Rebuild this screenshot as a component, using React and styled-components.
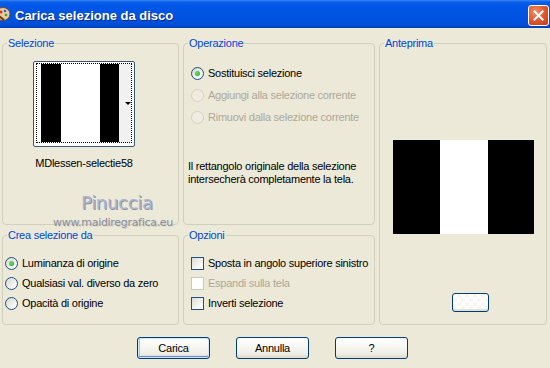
import React from "react";
import styled, { createGlobalStyle } from "styled-components";

const GlobalStyle = createGlobalStyle`
  html, body {
    margin: 0;
    padding: 0;
    background: #ece9d8;
  }
  body {
    font-family: "Liberation Sans", Arial, sans-serif;
    font-size: 11px;
    letter-spacing: -0.25px;
    color: #000;
  }
`;

const Window = styled.div`
  width: 550px;
  height: 368px;
  overflow: hidden;
  background: #ece9d8;
  display: flex;
  flex-direction: column;
`;

const TitleBar = styled.div`
  height: 28px;
  flex: none;
  display: flex;
  align-items: center;
  background: linear-gradient(
    to bottom,
    #3c87f0 0px,
    #0a5fea 2px,
    #0056e6 6px,
    #0053e0 18px,
    #004ed6 25px,
    #003fb8 28px
  );
`;

const TitleIcon = styled.svg`
  width: 16px;
  height: 16px;
  margin-left: -5px;
  flex: none;
`;

const TitleText = styled.div`
  margin-left: 4px;
  font-family: "Liberation Sans", Arial, sans-serif;
  font-weight: bold;
  font-size: 13px;
  letter-spacing: 0;
  color: #fff;
  text-shadow: 1px 1px 0 #0a2a8a;
  flex: 1;
  padding-top: 2px;
`;

const CloseButton = styled.div`
  width: 21px;
  height: 21px;
  box-sizing: border-box;
  margin-right: 1px;
  margin-top: 2px;
  border: 1px solid #fff;
  border-radius: 3px;
  background: radial-gradient(circle at 35% 30%, #f0906c 0%, #e0582f 50%, #c63a14 100%);
  display: flex;
  align-items: center;
  justify-content: center;
`;

const Content = styled.div`
  flex: 1;
  padding: 9px 0 0 2px;
  display: flex;
  flex-direction: column;
`;

const Panels = styled.div`
  display: grid;
  grid-template-columns: 177px 192px 168px;
  grid-template-rows: 188px 96px;
  column-gap: 4px;
  row-gap: 4px;
`;

const Group = styled.fieldset`
  position: relative;
  margin: 0;
  padding: 0;
  min-width: 0;
  border: 1px solid #d0d0bf;
  border-radius: 4px;
  grid-row: ${(p) => p.$row || "auto"};
  grid-column: ${(p) => p.$col || "auto"};
  display: flex;
  flex-direction: column;
`;

const Legend = styled.legend`
  color: #0046d5;
  padding: 0 1px;
  margin-left: 4px;
  line-height: 13px;
`;

const ThumbColumn = styled.div`
  margin: 11px 0 0 30px;
  width: 102px;
  display: flex;
  flex-direction: column;
  align-items: center;
`;

const Thumb = styled.div`
  width: 102px;
  height: 86px;
  box-sizing: border-box;
  border: 1px solid #34577c;
  border-radius: 2px;
  background: #fff;
  padding: 1px 2px 3px 2px;
  display: flex;
`;

const FocusRect = styled.div`
  flex: 1;
  border: 1px dotted #000;
  padding: 0 0 0 4px;
  display: flex;
`;

const Stripe = styled.div`
  width: ${(p) => p.$w}px;
  background: ${(p) => p.$color};
  flex: none;
  display: flex;
  align-items: center;
  justify-content: flex-end;
`;

const DropArrow = styled.div`
  width: 0;
  height: 0;
  border-left: 3px solid transparent;
  border-right: 3px solid transparent;
  border-top: 3px solid #000;
`;

const ThumbLabel = styled.div`
  margin-top: 10px;
  line-height: 13px;
  white-space: nowrap;
`;

const Watermark = styled.div`
  position: absolute;
  left: ${(p) => p.$left}px;
  top: ${(p) => p.$top}px;
  font-family: "DejaVu Sans", Verdana, sans-serif;
  font-size: ${(p) => p.$size}px;
  line-height: 1;
  letter-spacing: ${(p) => p.$spacing}px;
  color: ${(p) => p.$color};
  text-shadow: ${(p) => p.$shadow};
  white-space: nowrap;
  pointer-events: none;
`;

const OptionList = styled.div`
  display: flex;
  flex-direction: column;
  padding: ${(p) => p.$pad};
`;

const OptionRow = styled.div`
  height: ${(p) => p.$h}px;
  display: flex;
  align-items: center;
  gap: 4px;
  color: ${(p) => (p.$disabled ? "#aca899" : "#000")};
  white-space: nowrap;
`;

const Radio = styled.span`
  width: 13px;
  height: 13px;
  box-sizing: border-box;
  border-radius: 50%;
  flex: none;
  border: 1px solid ${(p) => (p.$disabled ? "#d4d1c2" : "#1c5180")};
  background: ${(p) =>
    p.$disabled ? "#efede2" : "linear-gradient(135deg, #d6d5ce 0%, #f3f3ef 60%, #ffffff 100%)"};
  display: flex;
  align-items: center;
  justify-content: center;
  &::after {
    content: "";
    display: ${(p) => (p.$checked ? "block" : "none")};
    width: 5px;
    height: 5px;
    border-radius: 50%;
    background: radial-gradient(circle at 40% 40%, #6ee06e, #1fa11f);
  }
`;

const Checkbox = styled.span`
  width: 13px;
  height: 13px;
  box-sizing: border-box;
  flex: none;
  border: 1px solid ${(p) => (p.$disabled ? "#cac8bb" : "#1c5180")};
  background: ${(p) =>
    p.$disabled ? "#fff" : "linear-gradient(135deg, #dcdcd7 0%, #f5f5f1 60%, #ffffff 100%)"};
`;

const Description = styled.div`
  margin: 32px 0 0 4px;
  line-height: 13px;
`;

const Preview = styled.div`
  margin: 90px auto 0;
  width: 141px;
  height: 94px;
  display: flex;
`;

const PreviewStripe = styled.div`
  flex: ${(p) => p.$w}px 0 0;
  background: ${(p) => p.$color};
`;

const SmallButton = styled.div`
  margin: 59px 0 0 72px;
  width: 37px;
  height: 19px;
  box-sizing: border-box;
  border: 1px solid #003c74;
  border-radius: 3px;
  background:
    repeating-conic-gradient(#f6f6f3 0% 25%, #ffffff 0% 50%) 0 0 / 8px 8px;
  box-shadow: inset 0 -2px 0 #e3e0d5;
`;

const ButtonRow = styled.div`
  display: flex;
  gap: 26px;
  margin-top: 12px;
  padding-left: 135px;
`;

const Button = styled.button`
  width: 73px;
  height: 22px;
  box-sizing: border-box;
  padding: 0;
  border: 1px solid #003c74;
  border-radius: 3px;
  font-family: "Liberation Sans", Arial, sans-serif;
  font-size: 11px;
  letter-spacing: -0.25px;
  color: #000;
  background: linear-gradient(to bottom, #ffffff 0%, #f7f7f4 40%, #eeede6 80%, #d8d4c8 100%);
  box-shadow: ${(p) =>
    p.$default
      ? "inset 0 0 0 1px #cee7ff, inset 0 -1px 0 1px #6982ee, inset 1px 0 0 1px #a4c3f5"
      : "inset 0 -1px 0 #e2dfd3"};
`;

function App() {
  return (
    <Window>
      <GlobalStyle />
      <TitleBar>
        <TitleIcon viewBox="0 0 16 16">
          <ellipse cx="8" cy="8" rx="7" ry="6.5" fill="#e8c9a0" stroke="#7a4a20" strokeWidth="1" />
          <circle cx="6" cy="6" r="1.5" fill="#d23c1c" />
          <circle cx="10" cy="5" r="1.3" fill="#2a6ad8" />
          <circle cx="11" cy="9" r="1.3" fill="#3aa03a" />
          <path d="M4 10 L9 14" stroke="#6b3a10" strokeWidth="2" />
        </TitleIcon>
        <TitleText>Carica selezione da disco</TitleText>
        <CloseButton>
          <svg width="11" height="11" viewBox="0 0 11 11">
            <path d="M1.5 1.5 L9.5 9.5 M9.5 1.5 L1.5 9.5" stroke="#fff" strokeWidth="2" strokeLinecap="square" />
          </svg>
        </CloseButton>
      </TitleBar>

      <Content>
        <Panels>
          <Group>
            <Legend>Selezione</Legend>
            <ThumbColumn>
              <Thumb>
                <FocusRect>
                  <Stripe $w={20} $color="#000" />
                  <Stripe $w={39} $color="#fff" />
                  <Stripe $w={19} $color="#000" />
                  <Stripe $w={12} $color="#f1f1f1">
                    <DropArrow />
                  </Stripe>
                </FocusRect>
              </Thumb>
              <ThumbLabel>MDlessen-selectie58</ThumbLabel>
            </ThumbColumn>
            <Watermark
              $left={78}
              $top={144}
              $size={18}
              $spacing={-0.3}
              $color="#aeb6cc"
              $shadow="1px 1px 0 #8890a8"
            >
              Pinuccia
            </Watermark>
            <Watermark
              $left={50}
              $top={167}
              $size={11}
              $spacing={-0.3}
              $color="#8a8c9c"
              $shadow="1px 1px 0 #d9d8cc"
            >
              www.maidiregrafica.eu
            </Watermark>
          </Group>

          <Group>
            <Legend>Operazione</Legend>
            <OptionList $pad="12px 0 0 7px">
              <OptionRow $h={22}>
                <Radio $checked />
                Sostituisci selezione
              </OptionRow>
              <OptionRow $h={22} $disabled>
                <Radio $disabled />
                Aggiungi alla selezione corrente
              </OptionRow>
              <OptionRow $h={22} $disabled>
                <Radio $disabled />
                Rimuovi dalla selezione corrente
              </OptionRow>
            </OptionList>
            <Description>
              Il rettangolo originale della selezione
              <br />
              intersecherà completamente la tela.
            </Description>
          </Group>

          <Group $row="1 / 3" $col="3">
            <Legend>Anteprima</Legend>
            <Preview>
              <PreviewStripe $w={47} $color="#000" />
              <PreviewStripe $w={48} $color="#fff" />
              <PreviewStripe $w={46} $color="#000" />
            </Preview>
            <SmallButton />
          </Group>

          <Group>
            <Legend>Crea selezione da</Legend>
            <OptionList $pad="11px 0 0 2px">
              <OptionRow $h={20}>
                <Radio $checked />
                Luminanza di origine
              </OptionRow>
              <OptionRow $h={20}>
                <Radio />
                Qualsiasi val. diverso da zero
              </OptionRow>
              <OptionRow $h={20}>
                <Radio />
                Opacità di origine
              </OptionRow>
            </OptionList>
          </Group>

          <Group>
            <Legend>Opzioni</Legend>
            <OptionList $pad="11px 0 0 7px">
              <OptionRow $h={20}>
                <Checkbox />
                Sposta in angolo superiore sinistro
              </OptionRow>
              <OptionRow $h={20} $disabled>
                <Checkbox $disabled />
                Espandi sulla tela
              </OptionRow>
              <OptionRow $h={20}>
                <Checkbox />
                Inverti selezione
              </OptionRow>
            </OptionList>
          </Group>
        </Panels>

        <ButtonRow>
          <Button $default>Carica</Button>
          <Button>Annulla</Button>
          <Button>?</Button>
        </ButtonRow>
      </Content>
    </Window>
  );
}

export default App;
